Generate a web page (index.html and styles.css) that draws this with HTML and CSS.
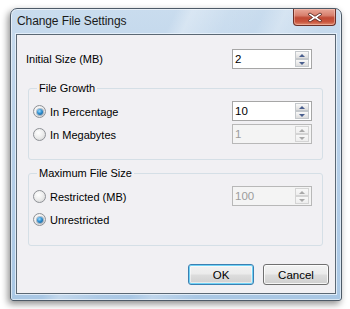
FILE: index.html
```html
<!DOCTYPE html>
<html>
<head>
<meta charset="utf-8">
<link rel="stylesheet" href="styles.css">
</head>
<body>
<div class="window">
  <div class="titlebar">
    <span class="title">Change File Settings</span>
    <div class="close">
      <svg width="16" height="11" viewBox="0 0 16 11">
        <path d="M3 1 L8 4.2 L13 1 L15 2.3 L10.5 5.5 L15 8.7 L13 10 L8 6.8 L3 10 L1 8.7 L5.5 5.5 L1 2.3 Z" fill="#ffffff" stroke="#5a2a22" stroke-width="0.9" stroke-linejoin="round"/>
      </svg>
    </div>
  </div>
  <div class="client">
    <div class="row first">
      <span class="label">Initial Size (MB)</span>
      <div class="spin">
        <span class="value">2</span>
        <div class="arrows"><span class="up"></span><span class="down"></span></div>
      </div>
    </div>
    <fieldset class="group">
      <legend>File Growth</legend>
      <div class="row">
        <span class="radio"><span class="dot on"></span>In Percentage</span>
        <div class="spin">
          <span class="value">10</span>
          <div class="arrows"><span class="up"></span><span class="down"></span></div>
        </div>
      </div>
      <div class="row">
        <span class="radio"><span class="dot"></span>In Megabytes</span>
        <div class="spin disabled">
          <span class="value">1</span>
          <div class="arrows"><span class="up"></span><span class="down"></span></div>
        </div>
      </div>
    </fieldset>
    <fieldset class="group second">
      <legend>Maximum File Size</legend>
      <div class="row">
        <span class="radio"><span class="dot"></span>Restricted (MB)</span>
        <div class="spin disabled">
          <span class="value">100</span>
          <div class="arrows"><span class="up"></span><span class="down"></span></div>
        </div>
      </div>
      <div class="row">
        <span class="radio"><span class="dot on"></span>Unrestricted</span>
      </div>
    </fieldset>
    <div class="buttons">
      <button class="btn default">OK</button>
      <button class="btn">Cancel</button>
    </div>
  </div>
</div>
</body>
</html>
```

FILE: styles.css
```css
html, body {
  margin: 0;
  padding: 0;
  background: #ffffff;
}
body {
  width: 350px;
  height: 309px;
  overflow: hidden;
  font-family: "Liberation Sans", Arial, sans-serif;
  font-size: 11px;
  color: #000;
}
.window {
  box-sizing: border-box;
  margin: 8px 0 0 10px;
  width: 332px;
  height: 293px;
  border: 1px solid #4d5a67;
  border-radius: 7px 7px 3px 3px;
  padding: 0 5px 6px 5px;
  display: flex;
  flex-direction: column;
  background:
    linear-gradient(115deg, rgba(255,255,255,0) 0px, rgba(255,255,255,0) 150px, rgba(255,255,255,0.3) 165px, rgba(255,255,255,0.06) 200px, rgba(255,255,255,0) 230px, rgba(255,255,255,0.25) 250px, rgba(255,255,255,0) 290px),
    linear-gradient(180deg, #c9dcee 0%, #b9d1e9 40%, #a9c7e4 100%);
  box-shadow: -2px 3px 7px rgba(0,0,0,0.45), inset 0 0 0 1px rgba(255,255,255,0.55);
}
.titlebar {
  height: 25px;
  display: flex;
  justify-content: space-between;
  align-items: flex-start;
}
.title {
  font-family: "Liberation Sans", Arial, sans-serif;
  font-size: 12px;
  line-height: 16px;
  padding: 4px 0 0 1px;
  color: #1a1a1a;
  letter-spacing: -0.1px;
}
.close {
  box-sizing: border-box;
  width: 43px;
  height: 17px;
  border: 1px solid #6b3028;
  border-top: none;
  border-radius: 0 0 4px 4px;
  background: linear-gradient(180deg, #e9a898 0%, #d8806e 40%, #c04a35 55%, #c9553d 80%, #df8e72 100%);
  box-shadow: inset 0 0 0 1px rgba(255,210,200,0.45);
  display: flex;
  align-items: center;
  justify-content: center;
}
.client {
  flex: 1;
  box-sizing: border-box;
  border: 1px solid #5b6874;
  box-shadow: 0 0 0 1px rgba(235,244,252,0.8);
  background: #f1f0f3;
  display: flex;
  flex-direction: column;
  padding: 0 12px 0 11px;
}
.row {
  display: flex;
  justify-content: space-between;
  align-items: center;
  height: 20px;
}
.row.first {
  margin: 14px 11px 0 -2px;
}
.group {
  margin: 13px 0 0 0;
  padding: 6px 10px 15px 4px;
  border: 1px solid #d5dfe6;
  border-radius: 3px;
  min-width: 0;
  display: flex;
  flex-direction: column;
  gap: 3px;
}
.group.second {
  margin-top: 7px;
  padding-bottom: 16px;
}
.group legend {
  padding: 0 2px;
  margin-left: 4px;
  line-height: 13px;
  color: #000;
}
.radio {
  display: flex;
  align-items: center;
  gap: 4px;
  margin-top: 1px;
}
.dot {
  box-sizing: border-box;
  width: 13px;
  height: 13px;
  border-radius: 50%;
  border: 1px solid #8e9196;
  background: radial-gradient(circle at 40% 35%, #ffffff 0%, #ececec 50%, #d0d0d0 100%);
  display: flex;
  align-items: center;
  justify-content: center;
}
.dot.on::after {
  content: "";
  width: 6px;
  height: 6px;
  border-radius: 50%;
  background: radial-gradient(circle at 40% 35%, #9fdcff 0%, #2f8fd0 45%, #0d4c80 100%);
  box-shadow: 0 0 0 1px rgba(40,80,120,0.35);
}
.spin {
  box-sizing: border-box;
  width: 80px;
  height: 20px;
  border: 1px solid #a6a6a6;
  background: #ffffff;
  display: flex;
  align-items: stretch;
}
.spin .value {
  flex: 1;
  padding-left: 2px;
  font-size: 11.5px;
  line-height: 18px;
  color: #000;
}
.spin.disabled {
  background: #f4f4f4;
  border-color: #b8b8b8;
}
.spin.disabled .value {
  color: #9c9c9c;
}
.arrows {
  width: 14px;
  padding: 1px 2px 1px 0;
  display: flex;
  flex-direction: column;
}
.arrows span {
  flex: 1;
  box-sizing: border-box;
  border: 1px solid #c4c8cc;
  background: linear-gradient(180deg, #f9f9f9 0%, #ebebeb 50%, #dcdcdc 100%);
  position: relative;
}
.arrows span::after {
  content: "";
  position: absolute;
  left: 3px;
  border-left: 3px solid transparent;
  border-right: 3px solid transparent;
}
.arrows .up::after {
  top: 2px;
  border-bottom: 3px solid #4a5f8e;
}
.arrows .down::after {
  top: 2px;
  border-top: 3px solid #4a5f8e;
}
.spin.disabled .arrows span {
  border-color: #d4d4d4;
  background: linear-gradient(180deg, #f8f8f8 0%, #eeeeee 100%);
}
.spin.disabled .arrows .up::after {
  border-bottom-color: #a8a8a8;
}
.spin.disabled .arrows .down::after {
  border-top-color: #a8a8a8;
}
.buttons {
  margin-top: 18px;
  display: flex;
  justify-content: flex-end;
  gap: 9px;
  margin-right: -6px;
}
.btn {
  box-sizing: border-box;
  width: 66px;
  height: 21px;
  padding: 0;
  font-family: "Liberation Sans", Arial, sans-serif;
  font-size: 11.5px;
  color: #000;
  border: 1px solid #707070;
  border-radius: 3px;
  background: linear-gradient(180deg, #f3f3f3 0%, #ebebeb 48%, #dddddd 52%, #cfcfcf 100%);
  box-shadow: inset 0 0 0 1px rgba(255,255,255,0.8);
}
.btn.default {
  border-color: #3c7fb1;
  background: linear-gradient(180deg, #f2f2f2 0%, #ebebeb 48%, #dddddd 52%, #cfcfcf 100%);
  box-shadow: inset 0 0 0 1px #6fd3f7, inset 0 0 0 2px rgba(255,255,255,0.5);
}
```
